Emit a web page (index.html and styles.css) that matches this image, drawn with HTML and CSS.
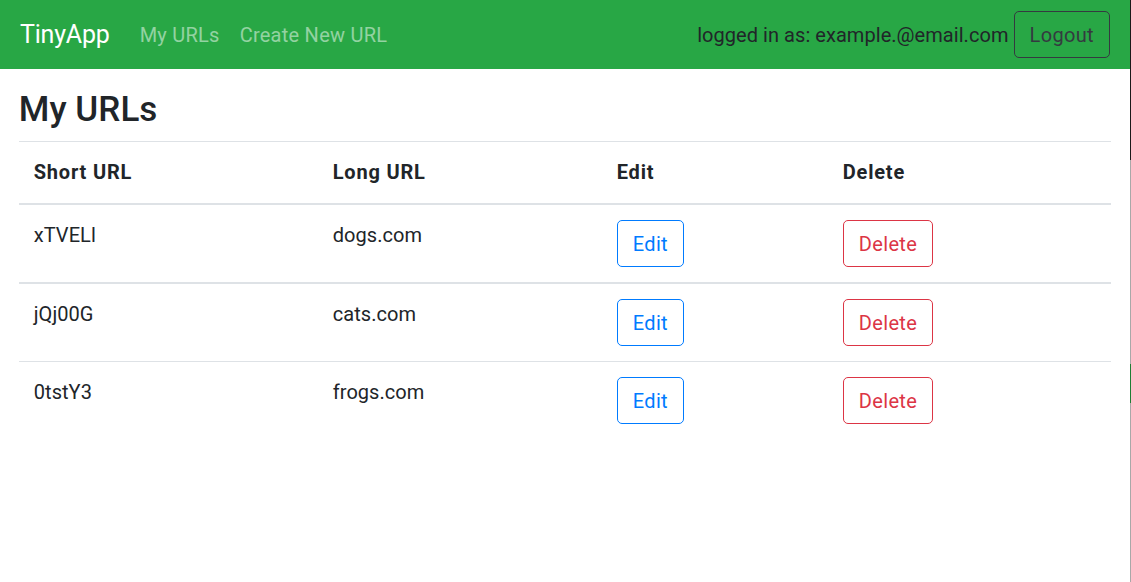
FILE: index.html
```html
<!DOCTYPE html>
<html lang="en">
<head>
<meta charset="utf-8">
<title>TinyApp</title>
<link rel="stylesheet" href="styles.css">
</head>
<body>
<div class="page">
<nav class="navbar">
  <a class="brand" href="#">TinyApp</a>
  <div class="nav-links">
    <a class="nav-link" href="#">My URLs</a>
    <a class="nav-link" href="#">Create New URL</a>
  </div>
  <div class="nav-right">
    <span class="login-text">logged in as: example.@email.com</span>
    <button class="btn btn-outline-dark">Logout</button>
  </div>
</nav>
<main class="container">
  <h3 class="title">My URLs</h3>
  <table class="table">
    <thead>
      <tr>
        <th class="col-short">Short URL</th>
        <th class="col-long">Long URL</th>
        <th class="col-edit">Edit</th>
        <th class="col-delete">Delete</th>
      </tr>
    </thead>
    <tbody>
      <tr>
        <td>xTVELl</td>
        <td>dogs.com</td>
        <td><button class="btn btn-outline-primary">Edit</button></td>
        <td><button class="btn btn-outline-danger">Delete</button></td>
      </tr>
    </tbody>
    <tbody class="group">
      <tr>
        <td>jQj00G</td>
        <td>cats.com</td>
        <td><button class="btn btn-outline-primary">Edit</button></td>
        <td><button class="btn btn-outline-danger">Delete</button></td>
      </tr>
      <tr>
        <td>0tstY3</td>
        <td>frogs.com</td>
        <td><button class="btn btn-outline-primary">Edit</button></td>
        <td><button class="btn btn-outline-danger">Delete</button></td>
      </tr>
    </tbody>
  </table>
</main>
</div>
</body>
</html>
```

FILE: styles.css
```css
html { font-size: 20px; }
* { box-sizing: border-box; }
body {
  margin: 0;
  font-family: Roboto, "Liberation Sans", Arial, sans-serif;
  font-size: 1rem;
  line-height: 1.5;
  letter-spacing: 0.05px;
  color: #212529;
  background: #fff;
}
.page {
  min-height: 100vh;
  border-right: 1px solid #a0a0a0;
  border-image: linear-gradient(to bottom, #1a1a1a 0 160px, #a8a8a8 160px 364px, #1e7e34 364px 403px, #a8a8a8 403px) 1;
}
.navbar {
  display: flex;
  align-items: center;
  background: #28a745;
  padding: 0.5rem 1rem;
  height: 69px;
}
.brand {
  color: #fff;
  font-size: 1.25rem;
  line-height: 1.5;
  letter-spacing: -0.2px;
  text-decoration: none;
  margin-right: 1rem;
  padding: 0.3125rem 0;
}
.nav-links { display: flex; }
.nav-link {
  color: rgba(255,255,255,0.5);
  text-decoration: none;
  letter-spacing: 0.25px;
  padding: 0.5rem;
}
.nav-right {
  margin-left: auto;
  display: flex;
  align-items: center;
  gap: 5px;
}
.login-text { color: #212529; }
.btn {
  font-family: inherit;
  font-size: 1rem;
  line-height: 1.5;
  letter-spacing: 0.35px;
  padding: 0.375rem 0.75rem;
  border-radius: 0.25rem;
  background: transparent;
  border: 1px solid;
  cursor: pointer;
}
.btn-outline-dark { color: #343a40; border-color: #343a40; }
.btn-outline-primary { color: #007bff; border-color: #007bff; }
.btn-outline-danger { color: #dc3545; border-color: #dc3545; }
.container { padding: 0 18.75px; }
.title {
  font-size: 1.75rem;
  font-weight: 500;
  line-height: 1.2;
  margin: 1rem 0 0.5rem;
}
.table {
  width: 100%;
  border-collapse: collapse;
}
.table th, .table td {
  padding: 0.75rem;
  text-align: left;
  vertical-align: top;
  border-top: 1px solid #dee2e6;
}
.table th { font-weight: 700; letter-spacing: 0.8px; }
.table thead th {
  vertical-align: bottom;
  padding-bottom: 16px;
  border-bottom: 2px solid #dee2e6;
}
.table tbody.group tr:first-child td { border-top: 2px solid #dee2e6; }
.col-short { width: 299px; }
.col-long { width: 284px; }
.col-edit { width: 226px; }
```
